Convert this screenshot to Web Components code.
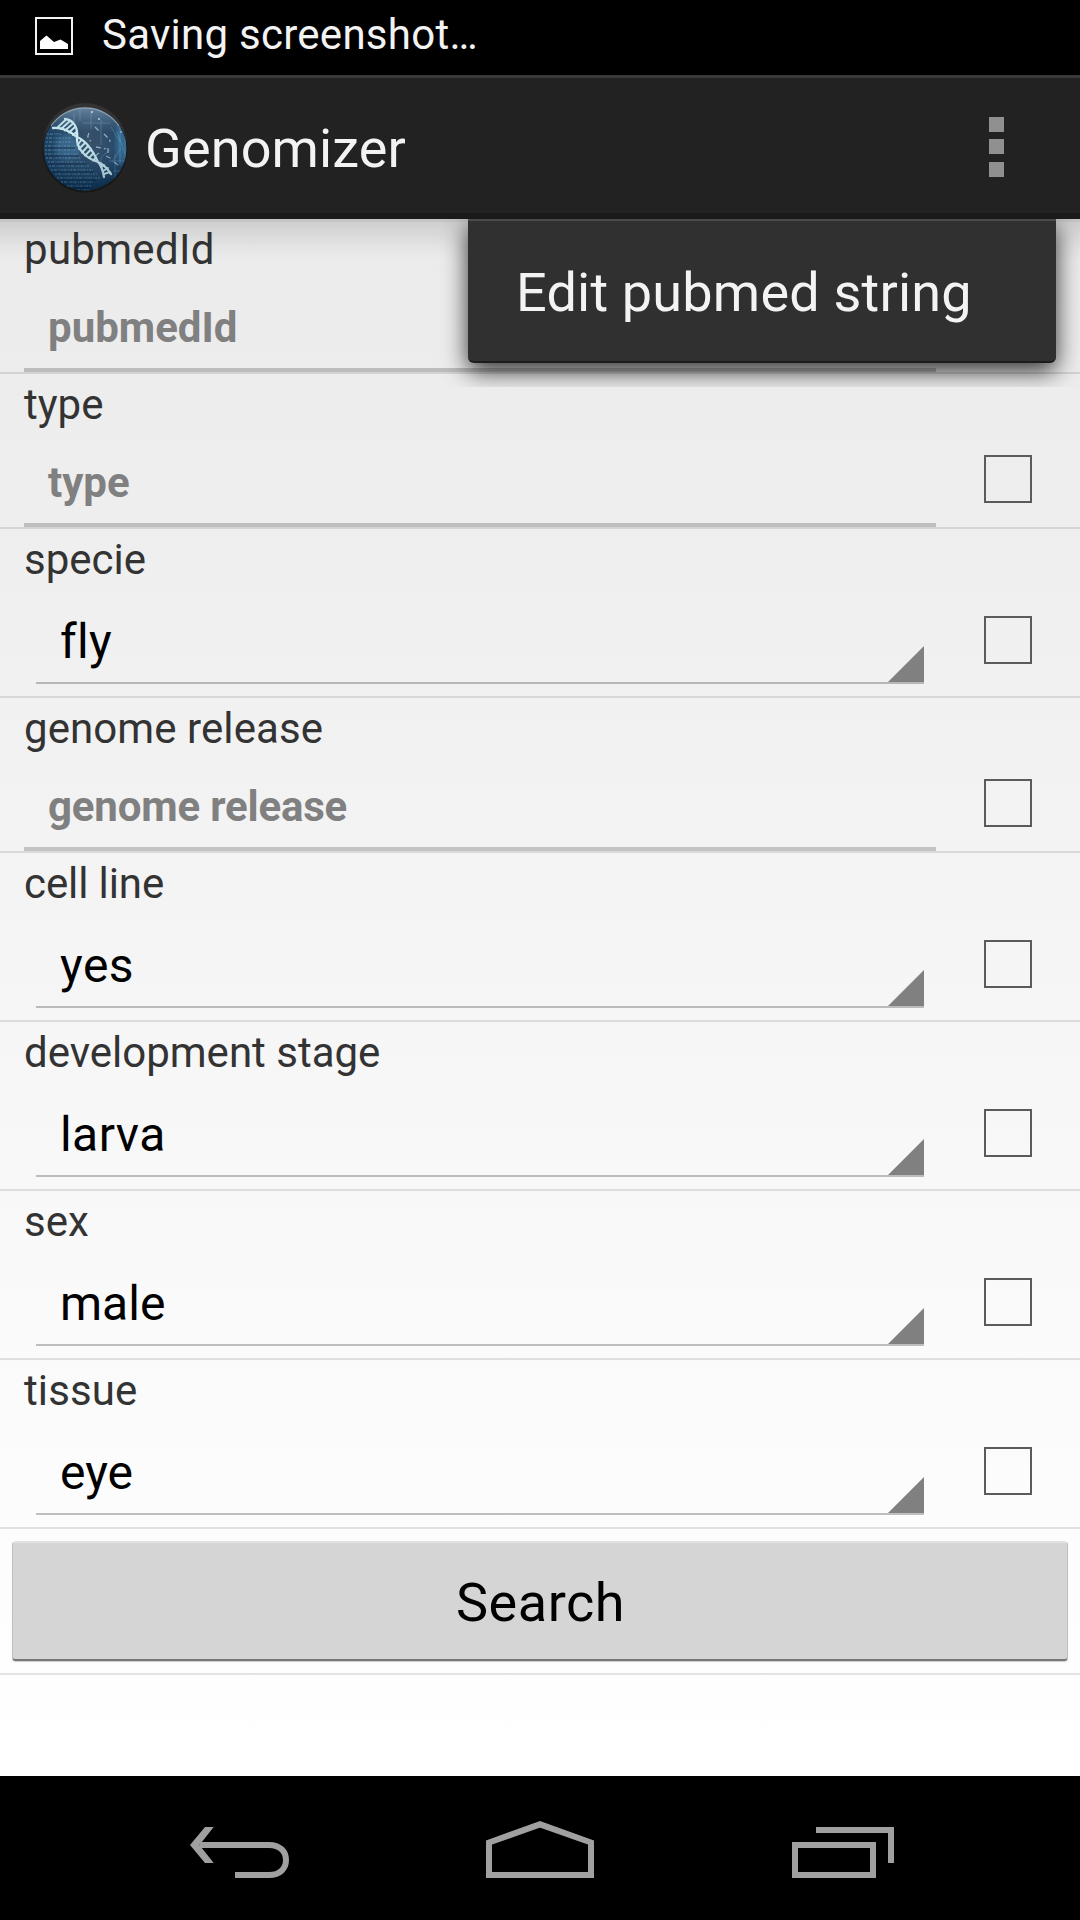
<!DOCTYPE html>
<html lang="en"><head><meta charset="utf-8"><title>Genomizer</title>
<style>html,body{margin:0;padding:0}body{width:1080px;height:1920px;overflow:hidden;background:#000}</style></head>
<body>
<genomizer-app></genomizer-app>
<script>
const define=(name,html,setup)=>customElements.define(name,class extends HTMLElement{
  constructor(){super();this.attachShadow({mode:'open'}).innerHTML=html;}
  connectedCallback(){if(setup)setup(this,this.shadowRoot);}
});

/* one line of text in a 60px line box; `ls` is its tracking in px */
define('text-line',`<style>
:host{display:block;white-space:nowrap;line-height:60px;height:60px;font-variant-ligatures:none}
</style><slot></slot>`,h=>{
  h.style.letterSpacing=(h.getAttribute('ls')||0)+'px';
});

define('status-bar',`<style>
:host{display:flex;height:75px;background:#000;color:#f3f3f3;font-size:42px}
svg{display:block;margin:17px 0 0 35px}
text-line{margin:5px 0 0 29px}
</style>
<svg width="38" height="38" viewBox="0 0 38 38"><rect x="1" y="1" width="36" height="36" fill="none" stroke="#f3f3f3" stroke-width="2"/><path d="M5 32V24L11.500 18.500 19 25 25.500 22.500 33 27V32Z" fill="#fff"/></svg>
<text-line ls=".26"><slot></slot></text-line>`);

define('dna-logo',`<style>:host{display:block}svg{display:block}</style>
<svg width="88" height="94" viewBox="0 0 88 94">
<defs>
<radialGradient id="g" cx=".55" cy=".4" r=".62"><stop offset="0" stop-color="#344a62"/><stop offset=".6" stop-color="#204262"/><stop offset="1" stop-color="#0c2f4e"/></radialGradient>
<linearGradient id="t" x2="0" y2="1"><stop offset="0" stop-color="#b4c6d8" stop-opacity=".5"/><stop offset=".3" stop-color="#7294b2" stop-opacity=".08"/><stop offset="1" stop-color="#001d3a" stop-opacity=".35"/></linearGradient>
<clipPath id="c"><circle cx="44" cy="48" r="41.500"/></clipPath>
<filter id="b"><feGaussianBlur stdDeviation="2.500"/></filter><filter id="s"><feGaussianBlur stdDeviation=".4"/></filter>
</defs>
<circle cx="44" cy="44" r="42" fill="#333"/><circle cx="44" cy="49" r="42.500" fill="#171717"/>
<circle cx="44" cy="48" r="41.500" fill="url(#g)"/>
<g clip-path="url(#c)">
<circle cx="28" cy="46" r="13" fill="#4179a2" opacity=".55" filter="url(#b)"/>
<ellipse cx="81" cy="42" rx="6" ry="22" fill="#3d86b5" opacity=".55" filter="url(#b)"/>
<g stroke="#62a5cf" stroke-opacity=".45" stroke-width="1.300" filter="url(#s)">
<path stroke-dasharray="2 1 3 1.500 1 1" d="M6 33H20M5 37H30M5 41H33M4 45H34M4 49H35M4 53H37M5 57H40M7 61H45M8 65H48M10 69H52M14 73H56M16 77H59M20 81H52M26 85H50M33 89H49"/>
</g>
<path stroke="#071f38" stroke-opacity=".55" stroke-width="1.500" d="M3 47H34M3 55H38M5 63H45M7 71H53M12 79H55M23 87H50"/>
<g fill="none" stroke="#7ec0e4" stroke-opacity=".35" stroke-width=".9" filter="url(#s)">
<path d="M50 12V28M42 22H69M60 19V44M33 13V21M70 26L79 41M76 30L84 53M79 24V64M84 35V58M71 61L80 47M60 65V56L69 49M72 70h11M68 60h17M74 53v28M39 8v12"/>
</g>
<path fill="none" stroke="#b1d5eb" stroke-opacity=".75" stroke-width="1.300" stroke-dasharray="5 3 2 4" d="M54 26l5 5M63 33l5 5 2 4M48 32q-3 6 2 8M55 46l11 2M67 47v6M58 52l-4 3M73 61l4 3M65 55l6 3M80 22v14" filter="url(#s)"/>
<g fill="none" stroke="#d2f2f6" stroke-linecap="round" filter="url(#s)">
<path stroke-width="2.300" d="M12 27C22 26 30 31 36 36C35 47 44 57 57 61C61 65 62 70 63 76M24 18C33 19 37 27 36 36C46 40 52 50 57 61C62 63 66 67 70 73"/>
<path stroke-width="1.900" d="M16 27L25 18.500M20 28L29 20M24 29.500L32 22.500M28 31.500L34 26M32 34L36 30.500M36.500 44L40 39.500M38 48L44 42M41 51.500L47 45M44 54.500L50 48.500M48 57L52.500 52M52 59.500L55 56.500M60 66L63 64M62 70L67 67M63 73L69 71"/>
</g>
<circle cx="51" cy="11" r="1" fill="#e0f7ff"/><circle cx="58" cy="18" r=".9" fill="#d9f5ff"/>
<circle cx="44" cy="48" r="41.500" fill="url(#t)"/>
</g>
<path d="M10 25A41 41 0 0 1 78 25" fill="none" stroke="#a6b9ca" stroke-opacity=".75" stroke-width="1.200"/>
</svg>`);

define('action-bar',`<style>
:host{display:flex;box-sizing:border-box;height:144px;border-top:3px solid #3a3a3a;background:linear-gradient(#222 0 135px,#1a1a1a 135px);color:#f3f3f3;font-size:54px}
dna-logo{margin:23px 0 0 41px}
text-line{margin:41px auto 0 16px}
.more{display:flex;flex-direction:column;gap:7px;margin:39px 76px 0 0}
.more i{width:15px;height:15px;background:#909090}
.more i:last-child{margin-top:1px}
</style><dna-logo></dna-logo><text-line ls=".13"><slot></slot></text-line><div class="more"><i></i><i></i><i></i></div>`);

define('search-row',`<style>
:host{display:flex;box-sizing:border-box;height:155px;border-bottom:2px solid rgba(0,0,0,.105);padding-left:24px;justify-content:space-between}
:host([kind=spinner]){height:169px}
.main{display:flex;flex-direction:column;width:912px;padding-top:1px}
.label{color:#333;font-size:42px}
.hint{box-sizing:border-box;height:92px;padding:18px 0 0 24px;border-bottom:4px solid rgba(0,0,0,.2);color:#808080;font-size:42px;font-weight:700}
.spin{display:flex;box-sizing:border-box;margin:0 12px;height:94px;justify-content:space-between;align-items:flex-end;border-bottom:2px solid rgba(0,0,0,.24);color:#000;font-size:48px}
.spin text-line{margin:0 0 10px 24px}
.box{box-sizing:border-box;width:48px;height:48px;border:2px solid #5b5b5b;margin:81px 48px 0 0}
:host([kind=spinner]) .box{margin-top:87px}
svg{display:block}
</style><div class="main"></div>
<div class="box"></div>`,(h,r)=>{
 const a=n=>h.getAttribute(n)||'';
 const field=a('kind')==='spinner'
  ?`<div class="spin"><text-line ls="${a('vls')}">${a('value')}</text-line><svg width="36" height="36"><path d="M36 0V36H0Z" fill="#808080"/></svg></div>`
  :`<div class="hint"><text-line ls="${a('vls')}">${a('label')}</text-line></div>`;
 r.querySelector('.main').innerHTML=`<text-line class="label" ls="${a('ls')}">${a('label')}</text-line>${field}`;
});

define('search-button',`<style>
:host{display:flex;box-sizing:border-box;height:146px;border-bottom:2px solid #e3e3e3;padding:12px}
button{all:unset;box-sizing:border-box;flex:1;height:120px;background:#d5d5d5;border-radius:4px;border:1px solid #c2c2c2;border-top:2px solid #e1e1e1;border-bottom:2px solid #777;box-shadow:0 1px 1px #ccc;color:#000;font-size:54px;display:flex;justify-content:center;align-items:flex-start;padding:30px 0 0 1px}
</style><button><text-line ls=".55"><slot></slot></text-line></button>`);

define('popup-menu',`<style>
:host{position:absolute;left:468px;top:0;width:588px;height:144px;box-sizing:border-box;padding:42px 0 0 48px;background:#303030;border-top:2px solid #4b4b4b;border-bottom:2px solid #1c1c1c;border-radius:0 0 6px 6px;color:#f3f3f3;font-size:54px;box-shadow:0 8px 24px rgba(0,0,0,.8)}
</style><text-line ls=".2"><slot></slot></text-line>`);

define('nav-bar',`<style>:host{display:flex;height:144px;background:#000;justify-content:space-between;padding:0 180px 0 185px;box-sizing:border-box}svg{display:block;fill:none;stroke:#a0a0a0;stroke-width:6;overflow:visible}</style>
<svg width="103" height="144"><path d="M15 69H84C95 69 101 75.500 101 84S95 99 84 99H50"/><path d="M20 51H28.700L14.500 69L28.700 87H20L5 69Z" fill="#a0a0a0" stroke="none"/></svg>
<svg width="108" height="144"><path d="M3 99V66.500L54 48.300L105 66.500V99Z"/></svg>
<svg width="108" height="144"><rect x="3" y="69" width="78" height="30"/><path d="M24 54H99V87"/></svg>`);

define('genomizer-app',`<style>
:host{display:flex;flex-direction:column;width:1080px;height:1920px;font-family:Roboto,"Noto Sans",sans-serif}
main{position:relative;flex:1;background:linear-gradient(#ebebeb,#eee 270px,#f7f7f7 870px,#fdfdfd 1350px,#fff)}
.shade{position:absolute;inset:0 0 auto;height:42px;background:linear-gradient(rgba(0,0,0,.16) 0 3px,rgba(0,0,0,.12) 3px,rgba(0,0,0,.03) 28px,transparent)}
.clip{position:absolute;inset:0 0 auto;height:168px;overflow:hidden}
</style>
<status-bar>Saving screenshot…</status-bar>
<action-bar>Genomizer</action-bar>
<main>
<div class="shade"></div>
<search-row label="pubmedId" ls=".3"></search-row>
<search-row label="type"></search-row>
<search-row kind="spinner" label="specie" value="fly" vls=".3"></search-row>
<search-row label="genome release" ls=".08" vls="-.18"></search-row>
<search-row kind="spinner" label="cell line" ls="-.1" value="yes" vls=".5"></search-row>
<search-row kind="spinner" label="development stage" value="larva" vls=".45"></search-row>
<search-row kind="spinner" label="sex" value="male"></search-row>
<search-row kind="spinner" label="tissue" ls=".1" value="eye"></search-row>
<search-button>Search</search-button>
<div class="clip"><popup-menu>Edit pubmed string</popup-menu></div>
</main>
<nav-bar></nav-bar>`);
</script>
</body></html>
